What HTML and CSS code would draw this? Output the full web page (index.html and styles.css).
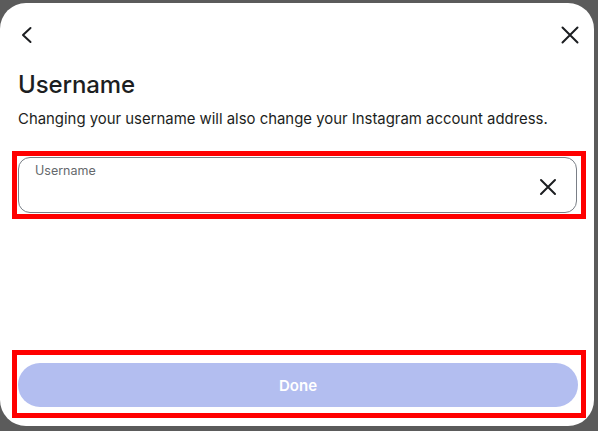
FILE: index.html
```html
<!DOCTYPE html>
<html lang="en">
<head>
<meta charset="utf-8">
<title>Username</title>
<link rel="stylesheet" href="styles.css">
</head>
<body>
<div class="card">
  <div class="header">
    <button class="icon-btn" aria-label="Back">
      <svg width="24" height="24" viewBox="0 0 24 24" fill="none" stroke="#1c1e21" stroke-width="2" stroke-linecap="round" stroke-linejoin="round"><path d="M16.5 5 L9 12 L16.5 19"/></svg>
    </button>
    <button class="icon-btn" aria-label="Close">
      <svg width="24" height="24" viewBox="0 0 24 24" fill="none" stroke="#1c1e21" stroke-width="2" stroke-linecap="round"><path d="M4.5 4.5 L19.5 19.5 M19.5 4.5 L4.5 19.5"/></svg>
    </button>
  </div>
  <h1 class="title">Username</h1>
  <p class="desc">Changing your username will also change your Instagram account address.</p>
  <div class="hl hl-input">
    <div class="field">
      <span class="label">Username</span>
      <svg class="clear" width="18" height="18" viewBox="0 0 18 18" fill="none" stroke="#1c1e21" stroke-width="2" stroke-linecap="round"><path d="M2 2 L16 16 M16 2 L2 16"/></svg>
    </div>
  </div>
  <div class="spacer"></div>
  <div class="hl hl-button">
    <button class="done">Done</button>
  </div>
</div>
</body>
</html>
```
FILE: styles.css
```css
html, body {
  margin: 0;
  padding: 0;
}
body {
  width: 598px;
  height: 431px;
  overflow: hidden;
  background: #5b5b5b;
  font-family: Inter, "Noto Sans", sans-serif;
  color: #1c1e21;
}
.card {
  box-sizing: border-box;
  margin-top: 3px;
  width: 594px;
  height: 423px;
  background: #ffffff;
  border-radius: 26px;
  padding: 20px 12px 8px 18px;
  display: flex;
  flex-direction: column;
}
.header {
  display: flex;
  justify-content: space-between;
  align-items: center;
  height: 24px;
}
.icon-btn {
  border: 0;
  background: none;
  padding: 0;
  width: 24px;
  height: 24px;
  display: flex;
}
.icon-btn:first-child {
  margin-left: -4px;
}
.title {
  margin: 23px 0 0 0;
  font-size: 24px;
  line-height: 30px;
  font-weight: 500;
  letter-spacing: -0.1px;
}
.desc {
  margin: 9px 0 0 0;
  font-size: 14.9px;
  line-height: 20px;
  font-weight: 400;
}
.hl {
  border: 5px solid #ff0000;
  margin-left: -6px;
  width: 574px;
  box-sizing: border-box;
}
.hl-input {
  margin-top: 22px;
  padding: 1px 4px 1px 1px;
}
.field {
  box-sizing: border-box;
  height: 56px;
  border: 1px solid #7a7f87;
  border-radius: 12px;
  position: relative;
  display: flex;
  align-items: center;
  justify-content: flex-end;
  padding-right: 19px;
}
.label {
  position: absolute;
  left: 16px;
  top: 5px;
  font-size: 12.5px;
  line-height: 16px;
  color: #65686c;
}
.clear {
  margin-top: 3px;
}
.spacer {
  flex: 1;
}
.hl-button {
  padding: 8px 3px 6px 1px;
}
.done {
  display: block;
  width: 100%;
  height: 44px;
  border: 0;
  border-radius: 22px;
  background: #b3bef0;
  color: #ffffff;
  font-family: Inter, "Noto Sans", sans-serif;
  font-size: 15px;
  font-weight: 600;
}
```
